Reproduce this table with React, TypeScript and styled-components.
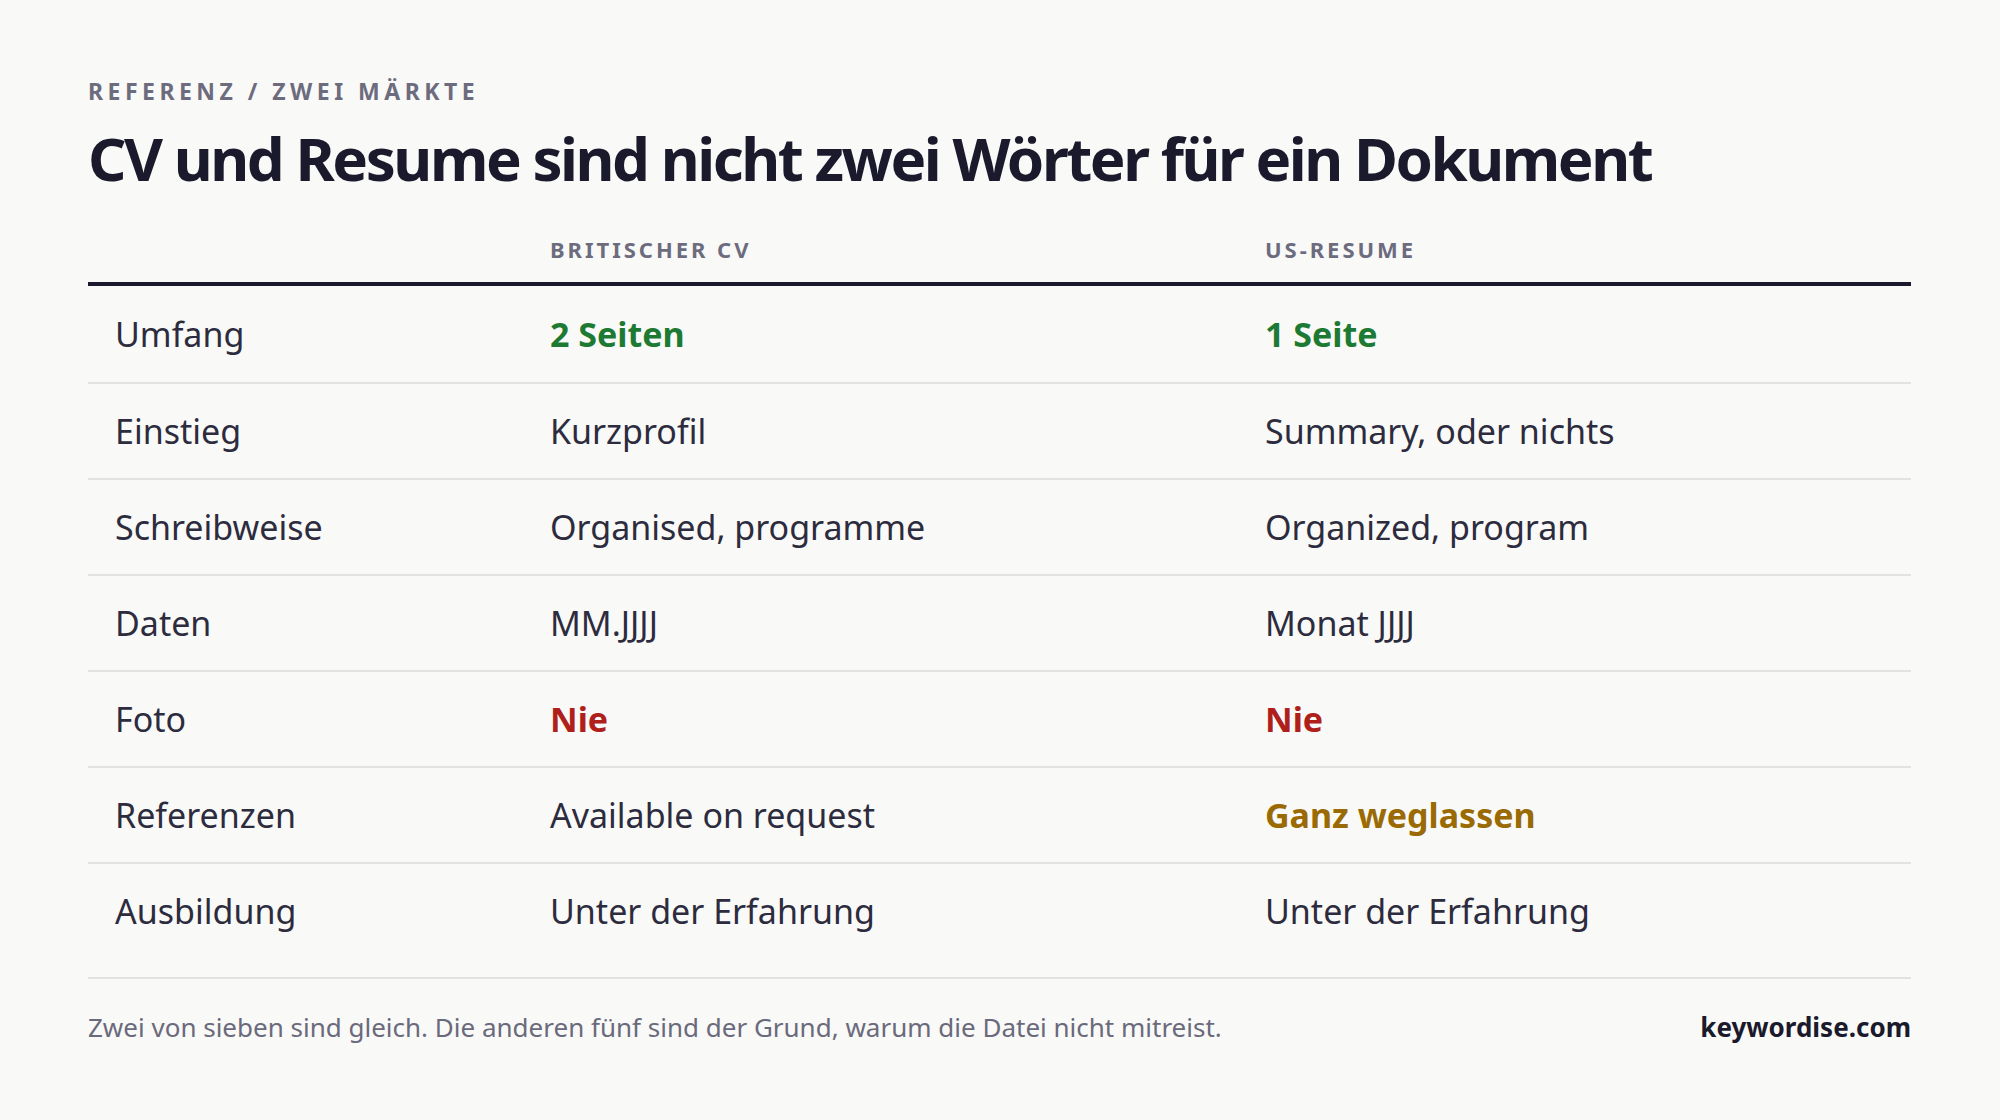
import React from "react";
import styled, { createGlobalStyle } from "styled-components";

type Tone = "plain" | "good" | "bad" | "warn";

interface Entry {
  text: string;
  tone?: Tone;
}

interface RowData {
  label: string;
  uk: Entry;
  us: Entry;
}

const rows: RowData[] = [
  { label: "Umfang", uk: { text: "2 Seiten", tone: "good" }, us: { text: "1 Seite", tone: "good" } },
  { label: "Einstieg", uk: { text: "Kurzprofil" }, us: { text: "Summary, oder nichts" } },
  { label: "Schreibweise", uk: { text: "Organised, programme" }, us: { text: "Organized, program" } },
  { label: "Daten", uk: { text: "MM.JJJJ" }, us: { text: "Monat JJJJ" } },
  { label: "Foto", uk: { text: "Nie", tone: "bad" }, us: { text: "Nie", tone: "bad" } },
  { label: "Referenzen", uk: { text: "Available on request" }, us: { text: "Ganz weglassen", tone: "warn" } },
  { label: "Ausbildung", uk: { text: "Unter der Erfahrung" }, us: { text: "Unter der Erfahrung" } },
];

const toneColors: Record<Tone, string> = {
  plain: "#2c2c3e",
  good: "#1d7a33",
  bad: "#b0201b",
  warn: "#9a6a04",
};

export default function App() {
  return (
    <>
      <GlobalStyle />
      <Page>
        <Eyebrow>Referenz / Zwei Märkte</Eyebrow>
        <Title>CV und Resume sind nicht zwei Wörter für ein Dokument</Title>
        <Table>
          <HeadRow>
            <HeadCell />
            <HeadCell>Britischer CV</HeadCell>
            <HeadCell>US-Resume</HeadCell>
          </HeadRow>
          {rows.map((row) => (
            <Row key={row.label}>
              <Cell>{row.label}</Cell>
              <Cell $tone={row.uk.tone}>{row.uk.text}</Cell>
              <Cell $tone={row.us.tone}>{row.us.text}</Cell>
            </Row>
          ))}
        </Table>
        <Footer>
          <Note>
            Zwei von sieben sind gleich. Die anderen fünf sind der Grund, warum die Datei nicht mitreist.
          </Note>
          <Brand>keywordise.com</Brand>
        </Footer>
      </Page>
    </>
  );
}

const GlobalStyle = createGlobalStyle`
  html, body {
    margin: 0;
    padding: 0;
    background: #f9f9f7;
  }
  body {
    font-family: "Noto Sans", "Open Sans", sans-serif;
  }
`;

const Page = styled.main`
  width: 2000px;
  height: 1120px;
  box-sizing: border-box;
  padding: 80px 89px 0 88px;
  display: flex;
  flex-direction: column;
`;

const Eyebrow = styled.div`
  font-size: 23px;
  line-height: 1;
  font-weight: 700;
  letter-spacing: 0.195em;
  text-transform: uppercase;
  color: #6c6c7e;
`;

const Title = styled.h1`
  margin: 25px 0 0;
  font-size: 60px;
  line-height: 1;
  font-weight: 700;
  letter-spacing: -0.041em;
  color: #1a1a2c;
`;

const Table = styled.div`
  margin-top: 50px;
  display: flex;
  flex-direction: column;
  padding-bottom: 19px;
  border-bottom: 2px solid #e2e2e0;
`;

const columns = "435px 715px 1fr";

const HeadRow = styled.div`
  display: grid;
  grid-template-columns: ${columns};
  border-bottom: 4px solid #1a1a2c;
  padding-bottom: 22px;
`;

const HeadCell = styled.div`
  padding: 0 27px;
  font-size: 22px;
  line-height: 1;
  font-weight: 700;
  letter-spacing: 0.135em;
  text-transform: uppercase;
  color: #6c6c7e;
`;

const Row = styled.div`
  display: grid;
  grid-template-columns: ${columns};
  align-items: center;
  box-sizing: border-box;
  height: 96px;
  & + & {
    border-top: 2px solid #e2e2e0;
  }
  &:first-of-type {
    height: 95px;
  }
`;

const Cell = styled.div<{ $tone?: Tone }>`
  padding: 0 27px;
  font-size: 34px;
  line-height: 1;
  font-weight: ${(p) => (p.$tone && p.$tone !== "plain" ? 700 : 400)};
  color: ${(p) => toneColors[p.$tone ?? "plain"]};
`;

const Footer = styled.footer`
  display: flex;
  justify-content: space-between;
  align-items: baseline;
  padding-top: 35px;
`;

const Note = styled.p`
  margin: 0;
  font-size: 26px;
  line-height: 1;
  color: #6a6a7c;
`;

const Brand = styled.span`
  font-size: 26px;
  line-height: 1;
  font-weight: 700;
  color: #1a1a2c;
`;
